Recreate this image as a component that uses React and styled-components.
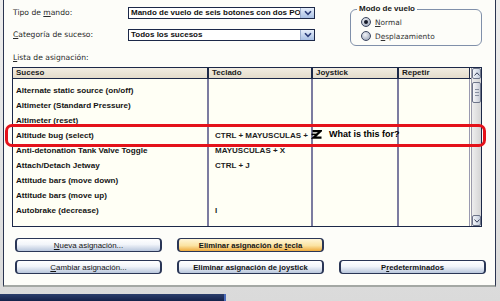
import React from 'react';
import styled, { createGlobalStyle } from 'styled-components';

const GlobalStyle = createGlobalStyle`
  *, *::before, *::after { box-sizing: border-box; }
  html, body { margin: 0; padding: 0; }
  body {
    width: 500px;
    height: 301px;
    overflow: hidden;
    background: #e2e2e2;
    font-family: "DejaVu Sans", Verdana, sans-serif;
    color: #1a1a1a;
  }
`;

const ARIAL = `"Liberation Sans", Arial, sans-serif`;

const Page = styled.div`
  position: relative;
  width: 500px;
  height: 301px;
  background: linear-gradient(#ededed, #dadada);
`;

const Panel = styled.div`
  margin-left: 3px;
  width: 493px;
  height: 287px;
  background: #fdfdf9;
  border-left: 1px solid #2a3450;
  border-right: 1px solid #2a3450;
  border-bottom: 2px solid #a4a8a4;
  padding: 7px 0 0 8px;
  display: flex;
  flex-direction: column;
`;

const TopArea = styled.div`
  display: flex;
  height: 41px;
`;

const Fields = styled.div`
  display: grid;
  grid-template-columns: 116px 187px;
  grid-auto-rows: 12px;
  row-gap: 10px;
  align-items: center;
`;

const Label = styled.span`
  padding-left: 1px;
  font-size: 7.6px;
  line-height: 10px;
  color: #2a2a2a;
  u { text-decoration: underline; }
`;

const Combo = styled.div`
  display: flex;
  height: 12px;
  border: 1px solid #1c2848;
  background: #fff;
`;

const ComboText = styled.div`
  flex: 1;
  padding-left: 2px;
  font-family: ${ARIAL};
  font-size: 8px;
  font-weight: bold;
  line-height: 10px;
  white-space: nowrap;
  overflow: hidden;
  color: #111;
`;

const ComboButton = styled.div`
  width: 14px;
  display: flex;
  align-items: center;
  justify-content: center;
  border-left: 1px solid #9aaccc;
  background: linear-gradient(#e6eefa, #a9c0e4);
`;

const GroupBox = styled.fieldset`
  margin: 0 0 0 35px;
  width: 132px;
  height: 41px;
  border: 1px solid #8090aa;
  border-radius: 6px;
  padding: 2px 0 0 10px;
  position: relative;
  top: -2px;
  legend {
    font-family: ${ARIAL};
    font-size: 8px;
    font-weight: bold;
    padding: 0 2px;
    margin-left: -4px;
    line-height: 8px;
  }
`;

const RadioRow = styled.div`
  display: flex;
  align-items: center;
  gap: 4px;
  height: 14px;
  font-size: 7.4px;
  color: #333;
`;

const RadioDot = styled.span`
  width: 10px;
  height: 10px;
  border-radius: 50%;
  border: 1px solid #3c4660;
  background: radial-gradient(circle at 40% 35%, #f2f4f8, #8c98ae);
  display: flex;
  align-items: center;
  justify-content: center;
  &::after {
    content: '';
    width: 4px;
    height: 4px;
    border-radius: 50%;
    background: ${(p) => (p.checked ? '#141828' : 'transparent')};
  }
`;

const ListLabel = styled(Label)`
  display: block;
  margin-top: 5px;
`;

const Table = styled.div`
  margin-top: 4px;
  width: 470px;
  height: 160px;
  border: 1px solid #1c2848;
  display: flex;
`;

const ListArea = styled.div`
  flex: 1;
  display: flex;
  flex-direction: column;
  background: #fffff5;
`;

const Columns = `196px 104px 86px 71px`;

const HeaderRow = styled.div`
  display: grid;
  grid-template-columns: ${Columns};
  height: 11px;
  border-bottom: 1px solid #1c2848;
`;

const HeaderCell = styled.div`
  background: linear-gradient(#f2ede2, #e4dccb);
  border-right: 2px solid #1c2848;
  font-family: ${ARIAL};
  font-size: 8px;
  font-weight: bold;
  line-height: 10px;
  padding-left: 3px;
  &:last-child { border-right: 1px solid #1c2848; }
`;

const Body = styled.div`
  flex: 1;
  display: grid;
  grid-template-columns: ${Columns};
`;

const Column = styled.div`
  border-right: 2px solid #7c7ca0;
  padding-top: 4px;
  &:last-child { border-right: 1px solid #9a9ab0; }
`;

const Cell = styled.div`
  height: 15px;
  line-height: 15px;
  padding-left: 3px;
  font-family: ${ARIAL};
  font-size: 8.1px;
  font-weight: bold;
  white-space: nowrap;
  color: #141414;
`;

const KeyCell = styled(Cell)`
  padding-left: 6px;
  font-size: 8px;
  color: #1e1e1e;
`;

const Scrollbar = styled.div`
  width: 10px;
  display: flex;
  flex-direction: column;
  background: linear-gradient(90deg, #eeeeee, #d4d4d4);
  border-left: 1px solid #9a9aaa;
`;

const ScrollArrow = styled.div`
  height: 11px;
  display: flex;
  align-items: center;
  justify-content: center;
  background: linear-gradient(90deg, #f4f6fa, #c4cddc);
  border: 1px solid #6c7488;
  border-radius: 2px;
`;

const ScrollTrack = styled.div`
  flex: 1;
  padding-top: 3px;
`;

const ScrollThumb = styled.div`
  height: 21px;
  border: 1px solid #6c7488;
  border-radius: 2px;
  background: linear-gradient(90deg, #f8f8fa, #c8ccd6);
  display: flex;
  flex-direction: column;
  align-items: center;
  justify-content: center;
  gap: 2px;
  span {
    width: 4px;
    height: 1px;
    background: #8890a0;
  }
`;

const Buttons = styled.div`
  margin: 11px 0 0 3px;
  display: grid;
  grid-template-columns: repeat(3, 147px);
  grid-auto-rows: 14px;
  column-gap: 15px;
  row-gap: 8px;
`;

const Button = styled.button`
  grid-column: ${(p) => p.col};
  grid-row: ${(p) => p.row};
  height: 14px;
  padding: 0;
  border: 1px solid #2a3656;
  border-left-width: 2px;
  border-right-width: 2px;
  border-radius: 4px;
  font-family: ${ARIAL};
  font-size: ${(p) => (p.bold ? '7.7px' : '7.9px')};
  font-weight: ${(p) => (p.bold ? 'bold' : 'normal')};
  color: #141414;
  line-height: 11px;
  background: ${(p) =>
    p.hot
      ? 'linear-gradient(#fff6d8, #fbe3a2 55%, #eeaa3c)'
      : 'linear-gradient(#ffffff, #f2f5fa 45%, #b8c6dc)'};
  u { text-decoration: underline; }
`;

const Footer = styled.div`
  height: 14px;
  display: flex;
  align-items: flex-end;
`;

const TaskBar = styled.div`
  width: 226px;
  height: 7px;
  background: linear-gradient(#2b3e6c, #14224a);
  border-right: 2px solid #4a6ab8;
`;

const Highlight = styled.div`
  position: absolute;
  left: 5px;
  top: 124px;
  width: 481px;
  height: 23px;
  border: 3px solid #e4121a;
  border-radius: 7px;
  pointer-events: none;
`;

const Note = styled.div`
  position: absolute;
  left: 311px;
  top: 129px;
  display: flex;
  align-items: center;
  gap: 7px;
  font-family: ${ARIAL};
  font-size: 9px;
  font-weight: bold;
  color: #000;
`;

const Chevron = () => (
  <svg width="8" height="6" viewBox="0 0 8 6">
    <path d="M1 1.2 L4 4.4 L7 1.2" fill="none" stroke="#2a3c78" strokeWidth="1.6" />
  </svg>
);

const Arrow = ({ down }) => (
  <svg width="6" height="4" viewBox="0 0 6 4" style={{ transform: down ? 'rotate(180deg)' : 'none' }}>
    <path d="M0.5 3.5 L3 0.8 L5.5 3.5" fill="none" stroke="#38405a" strokeWidth="1" />
  </svg>
);

const Scribble = () => (
  <svg width="11" height="9" viewBox="0 0 11 9">
    <path d="M1.5 1.2 H9.5 L2.5 7.6 H10.5" fill="none" stroke="#000" strokeWidth="2.2" />
    <path d="M0.5 4.4 H7" fill="none" stroke="#000" strokeWidth="1.6" />
  </svg>
);

const events = [
  'Alternate static source (on/off)',
  'Altimeter (Standard Pressure)',
  'Altimeter (reset)',
  'Altitude bug (select)',
  'Anti-detonation Tank Valve Toggle',
  'Attach/Detach Jetway',
  'Attitude bars (move down)',
  'Attitude bars (move up)',
  'Autobrake (decrease)',
];

const keys = ['', '', '', 'CTRL + MAYUSCULAS +', 'MAYUSCULAS + X', 'CTRL + J', '', '', 'I'];

export default function App() {
  return (
    <Page>
      <GlobalStyle />
      <Panel>
        <TopArea>
          <Fields>
            <Label>Tipo de <u>m</u>ando:</Label>
            <Combo>
              <ComboText>Mando de vuelo de seis botones con dos PO</ComboText>
              <ComboButton><Chevron /></ComboButton>
            </Combo>
            <Label><u>C</u>ategoría de suceso:</Label>
            <Combo>
              <ComboText>Todos los sucesos</ComboText>
              <ComboButton><Chevron /></ComboButton>
            </Combo>
          </Fields>
          <GroupBox>
            <legend>Modo de vuelo</legend>
            <RadioRow>
              <RadioDot checked />
              <span><u>N</u>ormal</span>
            </RadioRow>
            <RadioRow>
              <RadioDot />
              <span>D<u>e</u>splazamiento</span>
            </RadioRow>
          </GroupBox>
        </TopArea>

        <ListLabel><u>L</u>ista de asignación:</ListLabel>

        <Table>
          <ListArea>
            <HeaderRow>
              <HeaderCell>Suceso</HeaderCell>
              <HeaderCell>Teclado</HeaderCell>
              <HeaderCell>Joystick</HeaderCell>
              <HeaderCell>Repetir</HeaderCell>
            </HeaderRow>
            <Body>
              <Column>
                {events.map((e) => (
                  <Cell key={e}>{e}</Cell>
                ))}
              </Column>
              <Column>
                {keys.map((k, i) => (
                  <KeyCell key={i}>{k}</KeyCell>
                ))}
              </Column>
              <Column />
              <Column />
            </Body>
          </ListArea>
          <Scrollbar>
            <ScrollArrow><Arrow /></ScrollArrow>
            <ScrollTrack>
              <ScrollThumb><span /><span /><span /></ScrollThumb>
            </ScrollTrack>
            <ScrollArrow><Arrow down /></ScrollArrow>
          </Scrollbar>
        </Table>

        <Buttons>
          <Button col={1} row={1}><u>N</u>ueva asignación...</Button>
          <Button col={2} row={1} hot bold>Eliminar asignación de <u>t</u>ecla</Button>
          <Button col={1} row={2}><u>C</u>ambiar asignación...</Button>
          <Button col={2} row={2} bold>Eliminar asignación de <u>j</u>oystick</Button>
          <Button col={3} row={2} bold>P<u>r</u>edeterminados</Button>
        </Buttons>
      </Panel>
      <Footer>
        <TaskBar />
      </Footer>

      <Highlight />
      <Note>
        <Scribble />
        <span>What is this for?</span>
      </Note>
    </Page>
  );
}
